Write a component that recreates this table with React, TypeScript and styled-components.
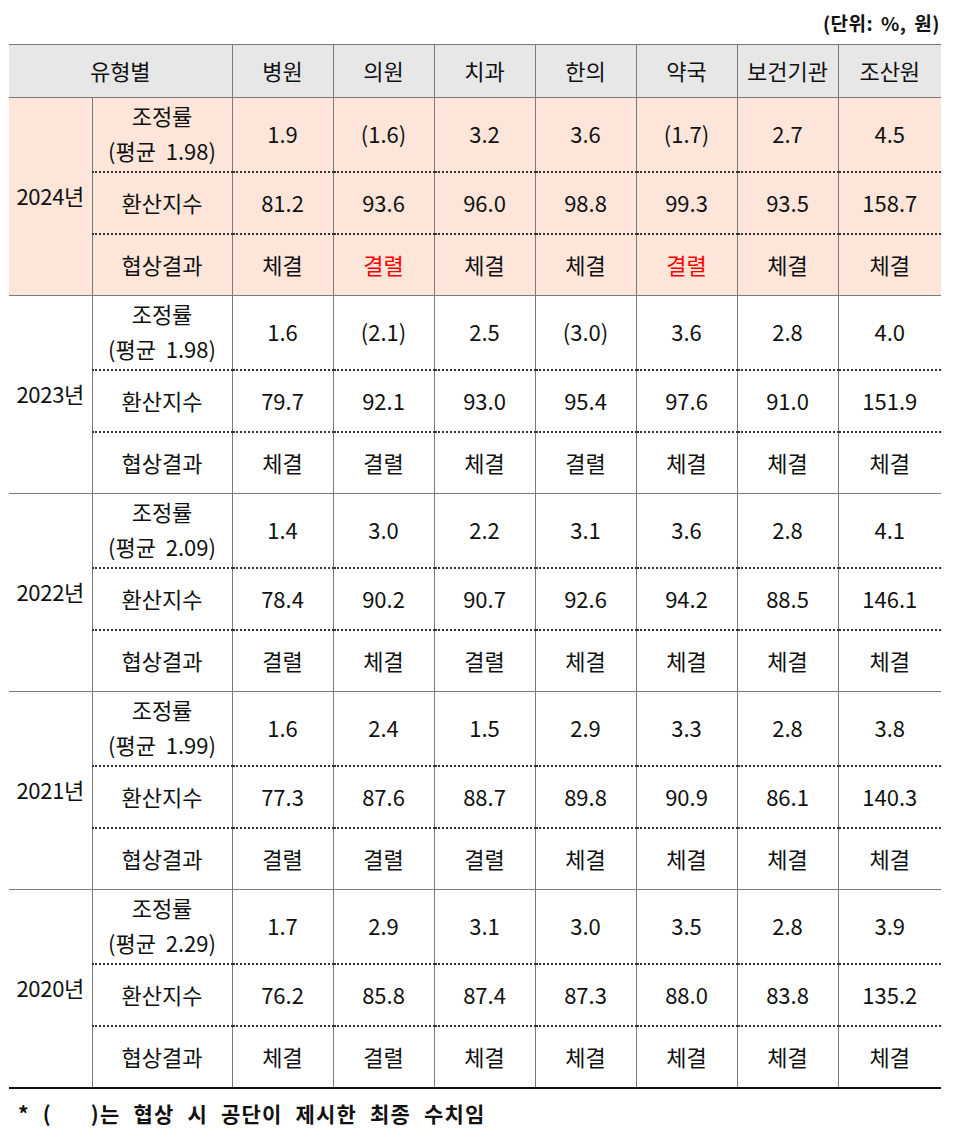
import React from 'react';
import styled, { createGlobalStyle } from 'styled-components';

const GlobalStyle = createGlobalStyle`
  html, body {
    margin: 0;
    padding: 0;
    background: #fff;
  }
  body {
    font-family: 'Noto Sans CJK KR', 'Noto Sans', sans-serif;
    color: #111;
  }
`;

const Page = styled.div`
  width: 960px;
  padding: 0 19px 0 9px;
  box-sizing: border-box;
`;

const Unit = styled.div`
  height: 44px;
  display: flex;
  align-items: center;
  justify-content: flex-end;
  font-size: 19px;
  font-weight: 700;
  letter-spacing: 0.5px;
  word-spacing: 3px;
  padding-right: 1px;
`;

const Table = styled.table`
  width: 932px;
  border-collapse: collapse;
  table-layout: fixed;
  border-top: 1px solid #777;
  border-bottom: 2px solid #111;
  font-size: 22px;
`;

const HeadCell = styled.th`
  height: 50px;
  padding: 0 0 2px;
  background: #e7e7e7;
  font-weight: 400;
  text-align: center;
  border-left: 1px solid #7a7a7a;
  border-bottom: 1px solid #7a7a7a;
  &:first-child {
    border-left: none;
  }
`;

const Row = styled.tr<{ $highlight?: boolean; $first?: boolean }>`
  background: ${({ $highlight }) => ($highlight ? '#fde6d9' : '#fff')};
  & > td {
    border-top: ${({ $first }) => ($first ? '1px solid #7a7a7a' : '2px dotted #333')};
  }
`;

const Cell = styled.td<{ $tall?: boolean; $red?: boolean }>`
  height: ${({ $tall }) => ($tall ? '70px' : '57px')};
  padding: 0 0 3px;
  text-align: center;
  vertical-align: middle;
  border-left: 1px solid #7a7a7a;
  color: ${({ $red }) => ($red ? '#ff0000' : '#111')};
  line-height: ${({ $tall }) => ($tall ? '35px' : '26px')};
  white-space: pre;
`;

const YearCell = styled.td`
  padding: 0 0 3px;
  text-align: center;
  vertical-align: middle;
  letter-spacing: -0.3px;
  border-top: 1px solid #7a7a7a !important;
`;

const Note = styled.div`
  height: 48px;
  display: flex;
  align-items: center;
  padding-left: 9px;
  font-size: 21px;
  font-weight: 700;
  letter-spacing: 1.2px;
  word-spacing: 7px;
  white-space: pre;
`;

type Block = {
  year: string;
  avg: string;
  rate: string[];
  index: string[];
  result: string[];
  highlight?: boolean;
};

const blocks: Block[] = [
  {
    year: '2024년',
    avg: '1.98',
    rate: ['1.9', '(1.6)', '3.2', '3.6', '(1.7)', '2.7', '4.5'],
    index: ['81.2', '93.6', '96.0', '98.8', '99.3', '93.5', '158.7'],
    result: ['체결', '결렬', '체결', '체결', '결렬', '체결', '체결'],
    highlight: true,
  },
  {
    year: '2023년',
    avg: '1.98',
    rate: ['1.6', '(2.1)', '2.5', '(3.0)', '3.6', '2.8', '4.0'],
    index: ['79.7', '92.1', '93.0', '95.4', '97.6', '91.0', '151.9'],
    result: ['체결', '결렬', '체결', '결렬', '체결', '체결', '체결'],
  },
  {
    year: '2022년',
    avg: '2.09',
    rate: ['1.4', '3.0', '2.2', '3.1', '3.6', '2.8', '4.1'],
    index: ['78.4', '90.2', '90.7', '92.6', '94.2', '88.5', '146.1'],
    result: ['결렬', '체결', '결렬', '체결', '체결', '체결', '체결'],
  },
  {
    year: '2021년',
    avg: '1.99',
    rate: ['1.6', '2.4', '1.5', '2.9', '3.3', '2.8', '3.8'],
    index: ['77.3', '87.6', '88.7', '89.8', '90.9', '86.1', '140.3'],
    result: ['결렬', '결렬', '결렬', '체결', '체결', '체결', '체결'],
  },
  {
    year: '2020년',
    avg: '2.29',
    rate: ['1.7', '2.9', '3.1', '3.0', '3.5', '2.8', '3.9'],
    index: ['76.2', '85.8', '87.4', '87.3', '88.0', '83.8', '135.2'],
    result: ['체결', '결렬', '체결', '체결', '체결', '체결', '체결'],
  },
];

const types = ['병원', '의원', '치과', '한의', '약국', '보건기관', '조산원'];

export default function App() {
  return (
    <Page>
      <GlobalStyle />
      <Unit>(단위: %, 원)</Unit>
      <Table>
        <colgroup>
          <col style={{ width: 83 }} />
          <col style={{ width: 140 }} />
          {types.map((t, i) => (
            <col key={t} style={{ width: i === types.length - 1 ? 103 : 101 }} />
          ))}
        </colgroup>
        <thead>
          <tr>
            <HeadCell colSpan={2}>유형별</HeadCell>
            {types.map((t) => (
              <HeadCell key={t}>{t}</HeadCell>
            ))}
          </tr>
        </thead>
        <tbody>
          {blocks.map((b) => (
            <React.Fragment key={b.year}>
              <Row $highlight={b.highlight} $first>
                <YearCell rowSpan={3}>{b.year}</YearCell>
                <Cell $tall>{`조정률\n(평균  ${b.avg})`}</Cell>
                {b.rate.map((v, i) => (
                  <Cell key={i} $tall>
                    {v}
                  </Cell>
                ))}
              </Row>
              <Row $highlight={b.highlight}>
                <Cell>환산지수</Cell>
                {b.index.map((v, i) => (
                  <Cell key={i}>{v}</Cell>
                ))}
              </Row>
              <Row $highlight={b.highlight}>
                <Cell>협상결과</Cell>
                {b.result.map((v, i) => (
                  <Cell key={i} $red={b.highlight && v === '결렬'}>
                    {v}
                  </Cell>
                ))}
              </Row>
            </React.Fragment>
          ))}
        </tbody>
      </Table>
      <Note>{'* (   )는 협상 시 공단이 제시한 최종 수치임'}</Note>
    </Page>
  );
}
